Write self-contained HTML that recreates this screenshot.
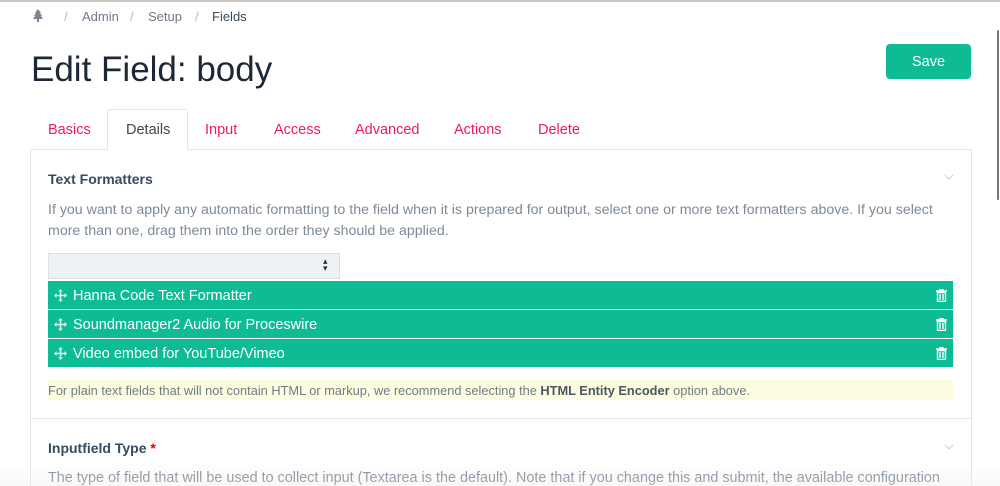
<!DOCTYPE html>
<html style="overflow:hidden;height:486px"><head><style>
*{margin:0;padding:0;box-sizing:border-box}
body{width:1000px;height:486px;overflow:hidden;background:#fff;font-family:"Liberation Sans",sans-serif;position:relative}
.a{position:absolute;white-space:nowrap}
.crumb{top:9px;font-size:13px;color:#6c7a89}
.tab{top:122px;font-size:14.5px;color:#ef1a5c}
.row{position:absolute;left:48px;width:905px;height:28px;background:#0dbb95;color:#fff;font-size:14.5px;line-height:30px;padding-left:25px}
.row svg.m{position:absolute;left:6px;top:8px}
.row svg.t{position:absolute;right:6px;top:8px}
</style></head><body>
<div class="a" style="left:0;top:0;width:1000px;height:2px;background:#c8c8c8"></div>
<svg class="a" style="left:32px;top:9px" width="12" height="13" viewBox="0 0 12 13"><path d="M6 0L9 4H8L10 7H9L11 10H7V13H5V10H1L3 7H2L4 4H3Z" fill="#7a8591"/></svg>
<div class="a crumb" style="left:64px;color:#bbb">/</div>
<div class="a crumb" style="left:82px">Admin</div>
<div class="a crumb" style="left:130px;color:#bbb">/</div>
<div class="a crumb" style="left:148px">Setup</div>
<div class="a crumb" style="left:195px;color:#bbb">/</div>
<div class="a crumb" style="left:212px;color:#354b60">Fields</div>
<div class="a" style="left:31px;top:50px;font-size:35px;color:#1c2836">Edit Field: body</div>
<div class="a" style="left:886px;top:44px;width:85px;height:35px;background:#0dbb95;border-radius:4px;color:#fff;font-size:14.5px;text-align:center;line-height:36px">Save</div>
<div class="a" style="left:30px;top:149px;width:942px;height:337px;border:1px solid #dfe6ee;border-bottom:none"></div>
<div class="a" style="left:107px;top:109px;width:81px;height:41px;border:1px solid #dfe6ee;border-bottom:none;background:#fff;border-radius:3px 3px 0 0"></div>
<div class="a tab" style="left:48px">Basics</div>
<div class="a tab" style="left:126px;color:#444">Details</div>
<div class="a tab" style="left:205px">Input</div>
<div class="a tab" style="left:274px">Access</div>
<div class="a tab" style="left:355px">Advanced</div>
<div class="a tab" style="left:454px">Actions</div>
<div class="a tab" style="left:538px">Delete</div>
<div class="a" style="left:48px;top:171px;font-size:14px;font-weight:bold;color:#354b60">Text Formatters</div>
<svg class="a" style="left:944px;top:174px" width="10" height="6"><path d="M1 1L5 5L9 1" stroke="#c8ced5" fill="none"/></svg>
<div class="a" style="left:48px;top:200px;font-size:14.2px;line-height:21px;color:#7d8a98;white-space:normal;width:905px">If you want to apply any automatic formatting to the field when it is prepared for output, select one or more text formatters above. If you select more than one, drag them into the order they should be applied.</div>
<div class="a" style="left:48px;top:253px;width:292px;height:26px;background:#eef1f6;border:1px solid #dbe1e8"></div>
<div class="a" style="left:323px;top:258px;font-size:9px;color:#333;line-height:7px">▴<br>▾</div>
<div class="row" style="top:281px"><svg class="m" width="13" height="13" viewBox="0 0 13 13"><path d="M6.5 0L9 2.5H7.3V5.7H10.5V4L13 6.5L10.5 9V7.3H7.3V10.5H9L6.5 13L4 10.5H5.7V7.3H2.5V9L0 6.5L2.5 4V5.7H5.7V2.5H4Z" fill="#d9f5ec"/></svg>Hanna Code Text Formatter<svg class="t" width="11" height="13" viewBox="0 0 11 13"><path d="M0 2H11M4 2V0.5H7V2M1.5 3.5H9.5V12.5H1.5ZM4 5V11M7 5V11" stroke="#fff" stroke-width="1.4" fill="none"/></svg></div>
<div class="row" style="top:310px"><svg class="m" width="13" height="13" viewBox="0 0 13 13"><path d="M6.5 0L9 2.5H7.3V5.7H10.5V4L13 6.5L10.5 9V7.3H7.3V10.5H9L6.5 13L4 10.5H5.7V7.3H2.5V9L0 6.5L2.5 4V5.7H5.7V2.5H4Z" fill="#d9f5ec"/></svg>Soundmanager2 Audio for Proceswire<svg class="t" width="11" height="13" viewBox="0 0 11 13"><path d="M0 2H11M4 2V0.5H7V2M1.5 3.5H9.5V12.5H1.5ZM4 5V11M7 5V11" stroke="#fff" stroke-width="1.4" fill="none"/></svg></div>
<div class="row" style="top:339px"><svg class="m" width="13" height="13" viewBox="0 0 13 13"><path d="M6.5 0L9 2.5H7.3V5.7H10.5V4L13 6.5L10.5 9V7.3H7.3V10.5H9L6.5 13L4 10.5H5.7V7.3H2.5V9L0 6.5L2.5 4V5.7H5.7V2.5H4Z" fill="#d9f5ec"/></svg>Video embed for YouTube/Vimeo<svg class="t" width="11" height="13" viewBox="0 0 11 13"><path d="M0 2H11M4 2V0.5H7V2M1.5 3.5H9.5V12.5H1.5ZM4 5V11M7 5V11" stroke="#fff" stroke-width="1.4" fill="none"/></svg></div>
<div class="a" style="left:48px;top:380px;width:905px;height:20px;background:#fcfde0;font-size:12.8px;line-height:21px;color:#6f7c88">For plain text fields that will not contain HTML or markup, we recommend selecting the <b style="color:#4a5866">HTML Entity Encoder</b> option above.</div>
<div class="a" style="left:31px;top:418px;width:940px;height:1px;background:#dfe6ee"></div>
<div class="a" style="left:48px;top:440px;font-size:14px;font-weight:bold;color:#354b60">Inputfield Type <span style="color:#e00">*</span></div>
<svg class="a" style="left:944px;top:444px" width="10" height="6"><path d="M1 1L5 5L9 1" stroke="#c8ced5" fill="none"/></svg>
<div class="a" style="left:48px;top:470px;font-size:14.4px;color:#7d8a98">The type of field that will be used to collect input (Textarea is the default). Note that if you change this and submit, the available configuration</div>
<div class="a" style="left:0;top:462px;width:1000px;height:24px;background:linear-gradient(rgba(255,255,255,0),rgba(235,235,235,.35))"></div>
<div class="a" style="left:997px;top:30px;width:2px;height:170px;background:#777;border-radius:1px"></div>
</body></html>
